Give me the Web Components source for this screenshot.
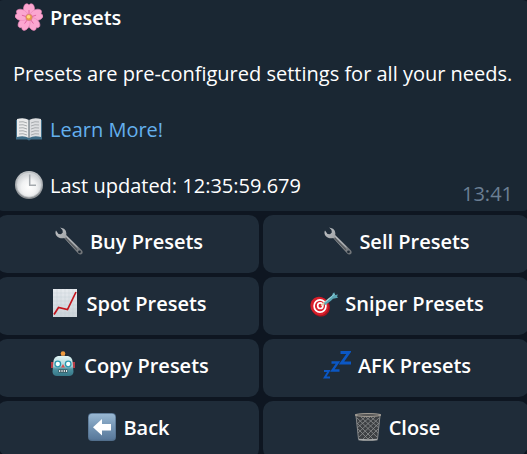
<!DOCTYPE html>
<html lang="en">
<head>
<meta charset="utf-8">
<meta name="viewport" content="width=device-width, initial-scale=1">
<title>Presets</title>
<style>
    html {
        height: 100%;
        overflow: hidden;
        background: #0e1621;
    }

    body {
        margin: 0;
        font: 20px/28px "Open Sans", "Noto Sans", sans-serif;
        color: #fff;
    }
</style>
</head>
<body>
<chat-message>
    <message-line icon="blossom"><strong>Presets</strong></message-line>
    <message-line>Presets are pre-configured settings for all your needs.</message-line>
    <message-line icon="book"><text-link href="#learn">Learn More!</text-link></message-line>
    <message-line icon="clock">Last updated: 12:35:59.679</message-line>
    <time slot="time" datetime="13:41">13:41</time>
    <inline-keyboard slot="keyboard">
        <keyboard-button icon="wrench">Buy Presets</keyboard-button>
        <keyboard-button icon="wrench">Sell Presets</keyboard-button>
        <keyboard-button icon="chart">Spot Presets</keyboard-button>
        <keyboard-button icon="target">Sniper Presets</keyboard-button>
        <keyboard-button icon="robot">Copy Presets</keyboard-button>
        <keyboard-button icon="sleep">AFK Presets</keyboard-button>
        <keyboard-button icon="back">Back</keyboard-button>
        <keyboard-button icon="bin">Close</keyboard-button>
    </inline-keyboard>
</chat-message>

<script>
const petal = `
    <path d="M14 15C8 11 7 4 10.500 1q2-1 3.500 1 1.500-2 3.500-1c3.500 3 2.500 10-3.500 14z"/>
    <path d="M14 12V7" stroke="#e0609f" stroke-width=".9"/>`;
const petals = [0, 72, 144, 216, 288]
    .map(angle => `<g transform="rotate(${angle} 14 14.5)">${petal}</g>`)
    .join("");

const ICONS = {
    blossom: `
        <g fill="#fba6d0" stroke="#ec86b9" stroke-width=".6">${petals}</g>
        <circle cx="14" cy="14.3" r="3.600" fill="#dc7f8e"/>
        <circle cx="14" cy="14.3" r="2.900" fill="#e79a48"/>
        <circle cx="13.600" cy="13.800" r="1.800" fill="#ffd780"/>`,
    book: `
        <path d="M1 5h26v19.500H16l-2 1-2-1H1z" fill="#3f6c86"/>
        <path d="M2 4q7-2 12 1v18q-5-3-12-1z" fill="#e9eaeb"/>
        <path d="M26 4q-7-2-12 1v18q5-3 12-1z" fill="#dcdee0"/>
        <path d="M14 5v18" stroke="#77838c" stroke-width="1.400"/>
        <path d="M4 7q4-1 8 1M4 10q4-1 8 1M4 13q4-1 8 1M4 16q4-1 8 1M4 19q4-1 8 1M24 7q-4-1-8 1M24 10q-4-1-8 1M24 13q-4-1-8 1M24 16q-4-1-8 1M24 19q-4-1-8 1" fill="none" stroke="#a7abae" stroke-width="1"/>`,
    clock: `
        <defs><linearGradient id="rim" x2="0" y2="1"><stop stop-color="#c3c7ca"/><stop offset="1" stop-color="#85898d"/></linearGradient>
        <radialGradient id="dial" cy=".6"><stop stop-color="#fff"/><stop offset=".6" stop-color="#f1f2f3"/><stop offset="1" stop-color="#d3d6d9"/></radialGradient></defs>
        <circle cx="14" cy="14" r="14" fill="url(#rim)"/>
        <circle cx="14" cy="13.700" r="12.500" fill="url(#dial)" stroke="#b5b9bc" stroke-width=".7"/>
        <path d="M14.700 3.500v10.800H21" fill="none" stroke="#a4a9ae" stroke-width="1.500"/>`,
    wrench: `
        <defs><linearGradient id="steel" x2="1" y2="1"><stop stop-color="#c2c5c8"/><stop offset="1" stop-color="#6c7074"/></linearGradient></defs>
        <path d="M5.200.5 9 1.700q3 2 2.200 6.300l15.600 15.200c2.500 3-1 6-3.600 3.400L9.200 10.900C5.500 12 1.200 10.200.5 6.200q-.1-1.500.5-2.700L3.500 7 6 7.200 7.800 5.500 7.500 3z" fill="url(#steel)"/>
        <path d="m10.500 10.800 11.500 12" stroke="#55595d" stroke-width="1.300"/>
        <path d="m11.500 9.500 11 10.800" stroke="#c9cccf" stroke-width=".7"/>
        <circle cx="24.500" cy="24.800" r="1.400" fill="#202b36"/>`,
    chart: `
        <defs><linearGradient id="sheet" x2="0" y2="1"><stop stop-color="#e6eaee"/><stop offset="1" stop-color="#cdd4da"/></linearGradient></defs>
        <path d="M2 0h24v28H2z" fill="url(#sheet)"/>
        <path d="M6 0v28M10 0v28M14 0v28M18 0v28M22 0v28M2 4h24M2 8h24M2 12h24M2 16h24M2 20h24M2 24h24" stroke="#bcc7d0" stroke-width=".3"/>
        <path d="m3 25.500 4.500-7 9 2L25 3" fill="none" stroke="#c4141c" stroke-width="1.700"/>`,
    target: `
        <ellipse cx="10.500" cy="18" rx="9.200" ry="9.800" fill="#a9121c" transform="rotate(-35 10.500 18)"/>
        <ellipse cx="9.500" cy="17" rx="8.900" ry="9.400" fill="#d81f2b" transform="rotate(-35 9.500 17)"/>
        <g fill="none" stroke="#fff" stroke-width="1.700">
            <ellipse cx="10" cy="17" rx="5.900" ry="6.200"/>
            <ellipse cx="10.300" cy="16.700" rx="2.600" ry="2.800"/>
        </g>
        <path d="m11 16.700 9-7.500" stroke="#e9c9a0" stroke-width="1.600"/>
        <path d="m14 14 6-6 2-1.500 1-2.500 1.500-.5.5 2.500L28 5.500l-1 1.700 1 1.500-5 1-2 2-6 4.500z" fill="#5ba5b4"/>
        <path d="m15.500 13 7-6 2-2" fill="none" stroke="#9ddbe3" stroke-width="1"/>`,
    robot: `
        <defs><linearGradient id="head" x2="0" y2="1"><stop stop-color="#e0f5f5"/><stop offset=".5" stop-color="#a9d3d7"/><stop offset=".65" stop-color="#4d93a2"/><stop offset="1" stop-color="#357686"/></linearGradient></defs>
        <path d="M2 11h3v6H2zM23 11h3v6h-3z" fill="#b73c45"/>
        <path d="M12 3h4v3h-4z" fill="#7b6c5c"/>
        <circle cx="14" cy="2.500" r="2.300" fill="#ee9a3d"/>
        <path d="M9 5h10q4 1 4.500 5l1 11q-.5 4-4.500 4H8q-4 0-4.500-4l1-11q.5-4 4.500-5z" fill="url(#head)"/>
        <g fill="#f4ffff" stroke="#2997ae" stroke-width="1.300"><circle cx="8.800" cy="13" r="2.800"/><circle cx="19.200" cy="13" r="2.800"/></g>
        <path d="m14 13 2 3.500h-4z" fill="#d84c4e"/>
        <path d="M9.500 18.500h9v3h-9z" fill="#31464f"/>
        <path d="M10.700 19v2M13 19v2M15.300 19v2M17.500 19v2" stroke="#e6f0f0" stroke-width="1.200"/>`,
    sleep: `
        <g fill="none" stroke="#0b57c4" stroke-linejoin="miter">
            <path d="M17.500 1.500H26L18.500 12H28" stroke-width="2.800"/>
            <path d="M8.500 11.500H15L9.300 19.500h7.200" stroke-width="2.300"/>
            <path d="M1 20h4.800L1.800 26.500H7" stroke-width="2"/>
        </g>`,
    back: `
        <defs><linearGradient id="tile" x2="0" y2="1"><stop stop-color="#99b8d3"/><stop offset=".5" stop-color="#7596b5"/><stop offset="1" stop-color="#58789a"/></linearGradient></defs>
        <rect width="28" height="28" rx="4" fill="#526f8c"/>
        <rect x=".7" y=".7" width="26.600" height="26" rx="3.500" fill="url(#tile)"/>
        <path d="M5 14.300 14 6v5h9v6.500h-9V22.500z" fill="#fff"/>`,
    bin: `
        <path d="M1.500 2h25l-2.800 25q-9.700 2-19.400 0z" fill="#3d4043"/>
        <path d="m3 5 20 19M7 4l17 16M12 4l13 11M17 4l8 7M3 10l16 16M4 16l10 10M25 5 5 24M21 4 4 20M16 4 3 15M11 4 3 11M25 10 9 26M24 16 14 26" stroke="#8d8f91" stroke-width=".8"/>
        <path d="M2 2.500 4.500 26M26 2.500 23.500 26" stroke="#85888a" stroke-width="1"/>
        <path d="M4.500 26.500q9.500 1 19 0" fill="none" stroke="#a7aaab" stroke-width="1.500"/>
        <ellipse cx="14" cy="2" rx="13" ry="1.400" fill="#4c4d4e" stroke="#aaa49b"/>`
};

// Attaches an open shadow root filled from a template
function render(host, html) {
    const template = document.createElement("template");
    template.innerHTML = html;
    host.attachShadow({ mode: "open" }).append(template.content.cloneNode(true));
}

class EmojiIcon extends HTMLElement {
    connectedCallback() {
        if (this.shadowRoot) return;
        render(this, `
            <style>
                :host {
                    display: block;
                    flex: none;
                    width: 28px;
                    height: 28px;
                    margin-top: -1px;
                }

                svg {
                    display: block;
                    width: 100%;
                    height: 100%;
                }
            </style>
            <svg viewBox="0 0 28 28" aria-hidden="true">${ICONS[this.getAttribute("name")] || ""}</svg>
        `);
    }
}

class TextLink extends HTMLElement {
    connectedCallback() {
        if (this.shadowRoot) return;
        render(this, `
            <style>
                :host { display: inline; }

                a {
                    color: #64b0ee;
                    text-decoration: none;
                }

                a:hover { text-decoration: underline; }
            </style>
            <a href="${this.getAttribute("href")}"><slot></slot></a>
        `);
    }
}

class MessageLine extends HTMLElement {
    connectedCallback() {
        if (this.shadowRoot) return;
        const icon = this.getAttribute("icon");
        render(this, `
            <style>
                :host {
                    display: flex;
                    align-items: flex-start;
                    gap: 7px;
                    height: 28px;
                }

                emoji-icon { margin-left: 2px; }

                ::slotted(strong) { font-weight: 600; }
            </style>
            ${icon ? `<emoji-icon name="${icon}"></emoji-icon>` : ""}
            <span><slot></slot></span>
        `);
    }
}

class KeyboardButton extends HTMLElement {
    connectedCallback() {
        if (this.shadowRoot) return;
        render(this, `
            <style>
                :host { display: block; }

                button {
                    display: flex;
                    align-items: flex-start;
                    justify-content: center;
                    gap: 7px;
                    width: 100%;
                    padding: 13px 8px 17px 10px;
                    border: 0;
                    border-radius: var(--corners, 10px);
                    background: #1f2c39;
                    color: inherit;
                    font: inherit;
                    font-weight: 600;
                    cursor: pointer;
                }

                button:hover { background: #263544; }
            </style>
            <button type="button">
                <emoji-icon name="${this.getAttribute("icon")}"></emoji-icon>
                <span><slot></slot></span>
            </button>
        `);
    }
}

class InlineKeyboard extends HTMLElement {
    connectedCallback() {
        if (this.shadowRoot) return;
        render(this, `
            <style>
                :host {
                    display: grid;
                    grid-template-columns: 131fr 133fr;
                    gap: 4px;
                }

                ::slotted(:nth-last-child(2)) { --corners: 10px 10px 10px 18px; }
                ::slotted(:last-child) { --corners: 10px 10px 18px 10px; }
            </style>
            <slot></slot>
        `);
    }
}

class ChatMessage extends HTMLElement {
    connectedCallback() {
        if (this.shadowRoot) return;
        render(this, `
            <style>
                /* the bubble runs slightly past both sides of the window */
                :host {
                    display: flex;
                    flex-direction: column;
                    gap: 4px;
                    margin: 0 -2px 0 -3px;
                }

                .bubble {
                    display: flex;
                    align-items: flex-end;
                    justify-content: space-between;
                    padding: 4px 16px 3px;
                    border-radius: 6px;
                    background: #1a2733;
                }

                .lines {
                    display: flex;
                    flex-direction: column;
                    gap: 28px;
                    padding-bottom: 8px;
                    white-space: nowrap;
                }

                .time {
                    width: 0;
                    display: flex;
                    justify-content: flex-end;
                    color: #6b7f93;
                }
            </style>
            <div class="bubble">
                <div class="lines"><slot></slot></div>
                <div class="time"><slot name="time"></slot></div>
            </div>
            <slot name="keyboard"></slot>
        `);
    }
}

customElements.define("emoji-icon", EmojiIcon);
customElements.define("text-link", TextLink);
customElements.define("message-line", MessageLine);
customElements.define("keyboard-button", KeyboardButton);
customElements.define("inline-keyboard", InlineKeyboard);
customElements.define("chat-message", ChatMessage);
</script>
</body>
</html>
